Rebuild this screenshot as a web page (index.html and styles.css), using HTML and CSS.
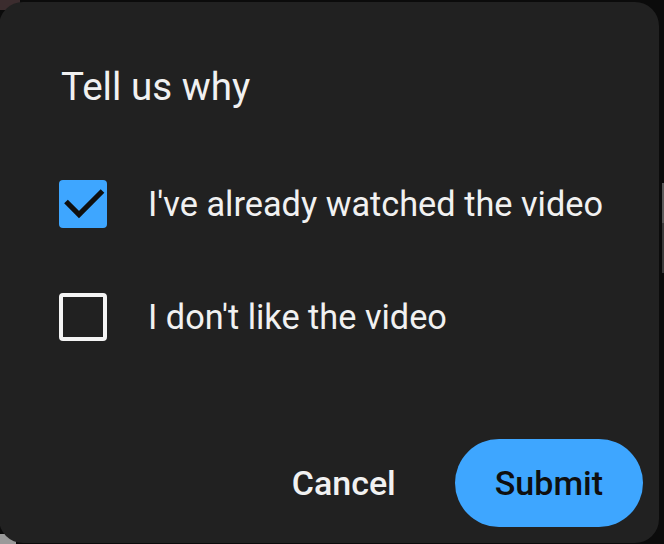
FILE: index.html
```html
<!DOCTYPE html>
<html lang="en">
<head>
<meta charset="utf-8">
<title>Tell us why</title>
<link rel="stylesheet" href="styles.css">
</head>
<body>
<div class="backdrop">
  <div class="dialog" role="dialog" aria-labelledby="dlg-title">
    <h2 class="title" id="dlg-title">Tell us why</h2>
    <div class="options">
      <label class="option">
        <span class="box checked">
          <svg viewBox="0 0 48 48" width="48" height="48" aria-hidden="true"><polyline points="7,21.5 20,34.5 43.5,11" fill="none" stroke="#0f0f0f" stroke-width="5.2"/></svg>
        </span>
        <span class="option-text">I've already watched the video</span>
      </label>
      <label class="option">
        <span class="box"></span>
        <span class="option-text">I don't like the video</span>
      </label>
    </div>
    <div class="actions">
      <button class="btn cancel" type="button">Cancel</button>
      <button class="btn submit" type="button">Submit</button>
    </div>
  </div>
</div>
</body>
</html>
```
FILE: styles.css
```css
* { box-sizing: border-box; }

html, body {
  margin: 0;
  padding: 0;
  background: #0b0b0b;
}

body {
  font-family: Roboto, "Liberation Sans", Arial, sans-serif;
}

.backdrop {
  width: 664px;
  height: 544px;
  overflow: hidden;
  background:
    linear-gradient(#3b2c2e, #3b2c2e) 0 0 / 20px 10px no-repeat,
    linear-gradient(#9a9a9a, #9a9a9a) 0 534px / 16px 10px no-repeat,
    linear-gradient(#5a5a5a, #5a5a5a) 662px 183px / 2px 40px no-repeat,
    linear-gradient(#3a3a3a, #3a3a3a) 662px 223px / 2px 50px no-repeat,
    #0b0b0b;
  padding-top: 2px;
}

.dialog {
  margin-left: -1px;
  width: 660px;
  height: 541px;
  background: #212121;
  border-radius: 24px;
  display: flex;
  flex-direction: column;
  padding: 61px 16px 16px 60px;
  color: #f1f1f1;
}

.title {
  margin: 0;
  padding-left: 2px;
  font-size: 38.6px;
  font-weight: 400;
  line-height: 48px;
  color: #f1f1f1;
}

.options {
  margin-top: 69px;
  display: flex;
  flex-direction: column;
  gap: 65px;
}

.option {
  display: flex;
  align-items: center;
  gap: 41px;
  height: 48px;
}

.box {
  flex: none;
  width: 48px;
  height: 48px;
  border: 4.5px solid #f4f4f4;
  border-radius: 4px;
  display: flex;
}

.box.checked {
  border: none;
  background: #3ea6ff;
}

.box svg {
  display: block;
}

.option-text {
  font-size: 34.3px;
  line-height: 48px;
  color: #f1f1f1;
}

.actions {
  margin-top: auto;
  display: flex;
  justify-content: flex-end;
  align-items: center;
  gap: 19px;
}

.btn {
  font-family: Roboto, "Liberation Sans", Arial, sans-serif;
  font-size: 34px;
  font-weight: 500;
  height: 88px;
  padding: 0 40px;
  border: none;
  border-radius: 44px;
  cursor: pointer;
}

.cancel {
  background: transparent;
  color: #f1f1f1;
}

.submit {
  background: #3ea6ff;
  color: #0f0f0f;
}
```
